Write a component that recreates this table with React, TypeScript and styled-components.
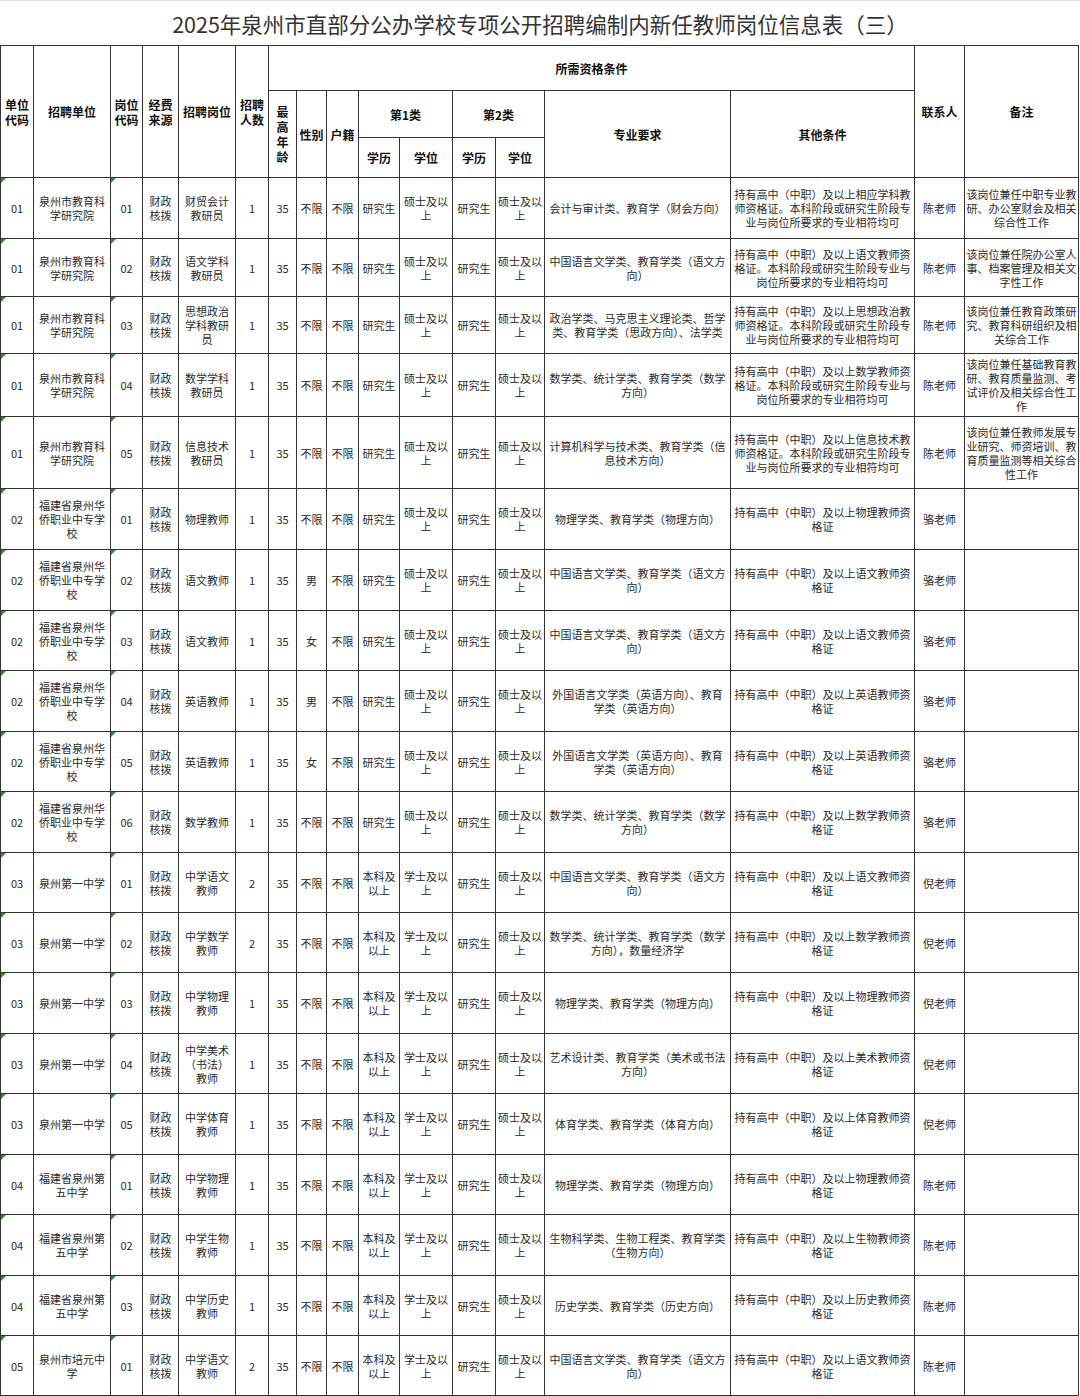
import React from "react";
import styled, { createGlobalStyle } from "styled-components";

const GlobalStyle = createGlobalStyle`
  html, body {
    margin: 0;
    padding: 0;
    background: #fff;
  }
  body {
    font-family: "Noto Sans CJK SC", "Noto Sans", sans-serif;
    color: #222;
  }
`;

const Sheet = styled.div`
  width: 1080px;
  background: #fff;
`;

const Title = styled.h1`
  margin: 0;
  height: 45px;
  display: flex;
  align-items: center;
  justify-content: center;
  font-size: 21.5px;
  font-weight: 400;
  color: #333;
  border-top: 1px solid #e2e2e2;
  box-sizing: border-box;
`;

const Grid = styled.table`
  width: 1079px;
  border-collapse: collapse;
  table-layout: fixed;
  font-size: 11px;
  line-height: 14px;
`;

const HeadRow = styled.tr<{ $h: number }>`
  height: ${(p) => p.$h}px;
`;

const HeadCell = styled.th`
  border: 1px solid #333;
  padding: 1px 2px;
  font-size: 12px;
  font-weight: 700;
  line-height: 15px;
  color: #111;
  text-align: center;
  vertical-align: middle;
`;

const Stacked = styled.span`
  display: inline-block;
  width: 1em;
  line-height: 15px;
`;

const DataRow = styled.tr<{ $h: number }>`
  height: ${(p) => p.$h}px;
`;

const Cell = styled.td<{ $flag?: boolean; $tight?: boolean }>`
  position: relative;
  border: 1px solid #333;
  padding: ${(p) => (p.$tight ? "1px 1px" : "1px 2px")};
  text-align: center;
  vertical-align: middle;
  color: #2a2a2a;

  &::before {
    content: "";
    display: ${(p) => (p.$flag ? "block" : "none")};
    position: absolute;
    top: 0;
    left: 0;
    width: 0;
    height: 0;
    border-top: 5px solid #2e8b2e;
    border-right: 5px solid transparent;
  }
`;

const colWidths = [33, 77, 32, 36, 57, 33, 28, 30, 32, 41, 53, 43, 49, 186, 184, 50, 114];

interface Post {
  unit: string;
  unitName: string;
  code: string;
  post: string;
  count: string;
  gender: string;
  edu1: string;
  deg1: string;
  major: string;
  other: string;
  contact: string;
  remark: string;
}

const cert = (s: string) => `持有高中（中职）及以上${s}教师资格证`;
const both = "。本科阶段或研究生阶段专业与岗位所要求的专业相符均可";

const INST = "泉州市教育科学研究院";
const HQ = "福建省泉州华侨职业中专学校";
const YZ = "泉州第一中学";
const WZ = "福建省泉州第五中学";

const MAJ = {
  yw: "中国语言文学类、教育学类（语文方向）",
  sx: "数学类、统计学类、教育学类（数学方向）",
  wl: "物理学类、教育学类（物理方向）",
  yy: "外国语言文学类（英语方向）、教育学类（英语方向）",
};

const base = { gender: "不限", edu1: "研究生", deg1: "硕士及以上", count: "1", remark: "" };
const ug = { edu1: "本科及以上", deg1: "学士及以上" };

const posts: Post[] = [
  { ...base, unit: "01", unitName: INST, code: "01", post: "财贸会计教研员", major: "会计与审计类、教育学（财会方向）", other: cert("相应学科") + both, contact: "陈老师", remark: "该岗位兼任中职专业教研、办公室财会及相关综合性工作" },
  { ...base, unit: "01", unitName: INST, code: "02", post: "语文学科教研员", major: MAJ.yw, other: cert("语文") + both, contact: "陈老师", remark: "该岗位兼任院办公室人事、档案管理及相关文字性工作" },
  { ...base, unit: "01", unitName: INST, code: "03", post: "思想政治学科教研员", major: "政治学类、马克思主义理论类、哲学类、教育学类（思政方向）、法学类", other: cert("思想政治") + both, contact: "陈老师", remark: "该岗位兼任教育政策研究、教育科研组织及相关综合工作" },
  { ...base, unit: "01", unitName: INST, code: "04", post: "数学学科教研员", major: MAJ.sx, other: cert("数学") + both, contact: "陈老师", remark: "该岗位兼任基础教育教研、教育质量监测、考试评价及相关综合性工作" },
  { ...base, unit: "01", unitName: INST, code: "05", post: "信息技术教研员", major: "计算机科学与技术类、教育学类（信息技术方向）", other: cert("信息技术") + both, contact: "陈老师", remark: "该岗位兼任教师发展专业研究、师资培训、教育质量监测等相关综合性工作" },
  { ...base, unit: "02", unitName: HQ, code: "01", post: "物理教师", major: MAJ.wl, other: cert("物理"), contact: "骆老师" },
  { ...base, unit: "02", unitName: HQ, code: "02", post: "语文教师", gender: "男", major: MAJ.yw, other: cert("语文"), contact: "骆老师" },
  { ...base, unit: "02", unitName: HQ, code: "03", post: "语文教师", gender: "女", major: MAJ.yw, other: cert("语文"), contact: "骆老师" },
  { ...base, unit: "02", unitName: HQ, code: "04", post: "英语教师", gender: "男", major: MAJ.yy, other: cert("英语"), contact: "骆老师" },
  { ...base, unit: "02", unitName: HQ, code: "05", post: "英语教师", gender: "女", major: MAJ.yy, other: cert("英语"), contact: "骆老师" },
  { ...base, unit: "02", unitName: HQ, code: "06", post: "数学教师", major: MAJ.sx, other: cert("数学"), contact: "骆老师" },
  { ...base, ...ug, unit: "03", unitName: YZ, code: "01", post: "中学语文教师", count: "2", major: MAJ.yw, other: cert("语文"), contact: "倪老师" },
  { ...base, ...ug, unit: "03", unitName: YZ, code: "02", post: "中学数学教师", count: "2", major: "数学类、统计学类、教育学类（数学方向），数量经济学", other: cert("数学"), contact: "倪老师" },
  { ...base, ...ug, unit: "03", unitName: YZ, code: "03", post: "中学物理教师", major: MAJ.wl, other: cert("物理"), contact: "倪老师" },
  { ...base, ...ug, unit: "03", unitName: YZ, code: "04", post: "中学美术（书法）教师", major: "艺术设计类、教育学类（美术或书法方向）", other: cert("美术"), contact: "倪老师" },
  { ...base, ...ug, unit: "03", unitName: YZ, code: "05", post: "中学体育教师", major: "体育学类、教育学类（体育方向）", other: cert("体育"), contact: "倪老师" },
  { ...base, ...ug, unit: "04", unitName: WZ, code: "01", post: "中学物理教师", major: MAJ.wl, other: cert("物理"), contact: "陈老师" },
  { ...base, ...ug, unit: "04", unitName: WZ, code: "02", post: "中学生物教师", major: "生物科学类、生物工程类、教育学类（生物方向）", other: cert("生物"), contact: "陈老师" },
  { ...base, ...ug, unit: "04", unitName: WZ, code: "03", post: "中学历史教师", major: "历史学类、教育学类（历史方向）", other: cert("历史"), contact: "陈老师" },
  { ...base, ...ug, unit: "05", unitName: "泉州市培元中学", code: "01", post: "中学语文教师", count: "2", major: MAJ.yw, other: cert("语文"), contact: "陈老师" },
];

const rowHeights = [61, 58, 57, 63, 72, 61, 61, 60, 61, 60, 61, 60, 60, 61, 60, 61, 60, 61, 60, 60];

export default function App() {
  return (
    <Sheet>
      <GlobalStyle />
      <Title>2025年泉州市直部分公办学校专项公开招聘编制内新任教师岗位信息表（三）</Title>
      <Grid>
        <colgroup>
          {colWidths.map((w, i) => (
            <col key={i} style={{ width: w }} />
          ))}
        </colgroup>
        <thead>
          <HeadRow $h={45}>
            <HeadCell rowSpan={3}>单位代码</HeadCell>
            <HeadCell rowSpan={3}>招聘单位</HeadCell>
            <HeadCell rowSpan={3}>岗位代码</HeadCell>
            <HeadCell rowSpan={3}>经费来源</HeadCell>
            <HeadCell rowSpan={3}>招聘岗位</HeadCell>
            <HeadCell rowSpan={3}>招聘人数</HeadCell>
            <HeadCell colSpan={9}>所需资格条件</HeadCell>
            <HeadCell rowSpan={3}>联系人</HeadCell>
            <HeadCell rowSpan={3}>备注</HeadCell>
          </HeadRow>
          <HeadRow $h={47}>
            <HeadCell rowSpan={2}>
              <Stacked>最高年龄</Stacked>
            </HeadCell>
            <HeadCell rowSpan={2}>性别</HeadCell>
            <HeadCell rowSpan={2}>户籍</HeadCell>
            <HeadCell colSpan={2}>第1类</HeadCell>
            <HeadCell colSpan={2}>第2类</HeadCell>
            <HeadCell rowSpan={2}>专业要求</HeadCell>
            <HeadCell rowSpan={2}>其他条件</HeadCell>
          </HeadRow>
          <HeadRow $h={40}>
            <HeadCell>学历</HeadCell>
            <HeadCell>学位</HeadCell>
            <HeadCell>学历</HeadCell>
            <HeadCell>学位</HeadCell>
          </HeadRow>
        </thead>
        <tbody>
          {posts.map((p, i) => (
            <DataRow key={i} $h={rowHeights[i]}>
              <Cell $flag>{p.unit}</Cell>
              <Cell>{p.unitName}</Cell>
              <Cell $flag>{p.code}</Cell>
              <Cell>财政核拨</Cell>
              <Cell>{p.post}</Cell>
              <Cell>{p.count}</Cell>
              <Cell>35</Cell>
              <Cell>{p.gender}</Cell>
              <Cell>不限</Cell>
              <Cell>{p.edu1}</Cell>
              <Cell>{p.deg1}</Cell>
              <Cell>研究生</Cell>
              <Cell $tight>硕士及以上</Cell>
              <Cell>{p.major}</Cell>
              <Cell>{p.other}</Cell>
              <Cell>{p.contact}</Cell>
              <Cell $tight>{p.remark}</Cell>
            </DataRow>
          ))}
        </tbody>
      </Grid>
    </Sheet>
  );
}
